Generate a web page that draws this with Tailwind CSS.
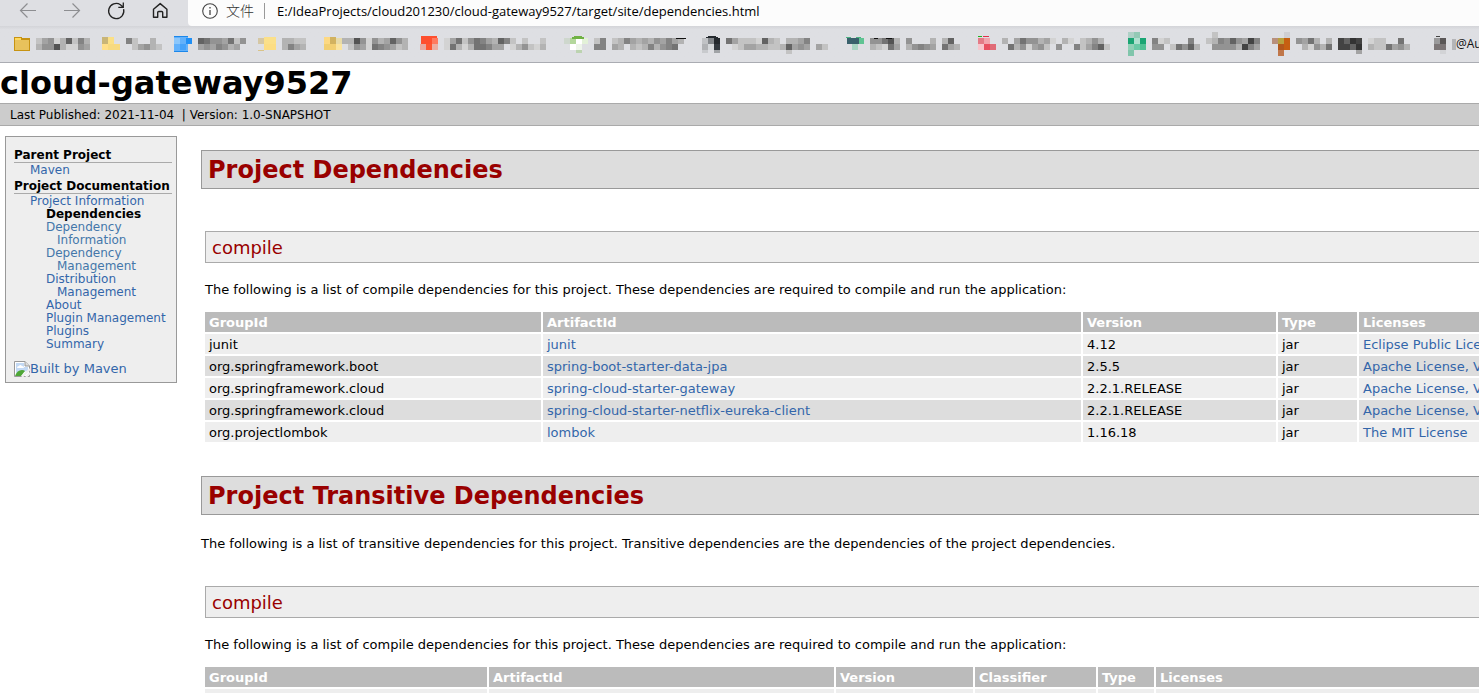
<!DOCTYPE html>
<html lang="en">
<head>
  <meta charset="utf-8"/>
  <meta name="viewport" content="width=device-width, initial-scale=1"/>
  <title>cloud-gateway9527 - Project Dependencies</title>
  <script src="https://cdn.jsdelivr.net/npm/@tailwindcss/browser@4"></script>
</head>
<body class="bg-white text-black font-['Verdana','DejaVu_Sans',sans-serif] text-[13px] leading-4 overflow-hidden">
  <!-- Browser toolbar -->
  <header class="bg-[#dedfe3] border-b border-[#aaacb2] font-['Open_Sans','Noto_Sans_CJK_SC',sans-serif]">
    <div class="flex h-[26px]">
      <nav class="flex items-start w-[188px] shrink-0 pl-[19px] gap-6 text-[#222]">
        <button aria-label="Back" class="w-5 h-[22px] text-[#8d8e91]">
          <svg width="20" height="22" viewBox="0 0 20 22" fill="none" stroke="currentColor" stroke-width="1.2"><path d="M17 10.5H1.5M8.500 3.500L1.500 10.500L8.500 17.500"/></svg>
        </button>
        <button aria-label="Forward" class="w-5 h-[22px] text-[#8d8e91]">
          <svg width="20" height="22" viewBox="0 0 20 22" fill="none" stroke="currentColor" stroke-width="1.2"><path d="M1 10.500H16.500M9.500 3.500L16.500 10.500L9.500 17.500"/></svg>
        </button>
        <button aria-label="Refresh" class="w-5 h-[22px]">
          <svg width="20" height="22" viewBox="0 0 20 22" fill="none" stroke="currentColor" stroke-width="1.3"><path d="M16.600 9.200A7.600 7.600 0 1 1 13.400 4.700L16 7M16.300 2.500V7.300H11.300"/></svg>
        </button>
        <button aria-label="Home" class="w-5 h-[22px]">
          <svg width="20" height="22" viewBox="0 0 20 22" fill="none" stroke="currentColor" stroke-width="1.4" stroke-linejoin="round"><path d="M2.500 9.300L9.200 3.600L15.900 9.300V17.300H11.700V12.500Q11.700 11.500 10.700 11.500H7.700Q6.700 11.500 6.700 12.500V17.300H2.500Z"/></svg>
        </button>
      </nav>
      <div class="flex grow items-center bg-[#fcfcfc] rounded-bl-[4px] pl-3.5 pb-1 text-[13px] whitespace-nowrap">
        <svg width="16" height="16" viewBox="0 0 16 16" fill="none" stroke="#444" stroke-width="1.1"><circle cx="8" cy="8" r="7.300"/><path d="M8 7V12M8 4V5.500" stroke-width="1.300"/></svg>
        <span class="ml-2 text-[14px] font-light text-[#333]">文件</span>
        <span class="w-px h-4 bg-[#999] ml-2.5 mr-3"></span>
        <input aria-label="Address" class="grow bg-transparent outline-none h-5" value="E:/IdeaProjects/cloud201230/cloud-gateway9527/target/site/dependencies.html"/>
      </div>
    </div>
    <div class="flex h-9 pl-3 pt-1.5 items-start overflow-hidden bg-linear-to-b from-[#d3d4d8] to-[#dedfe3] to-10%">
      <div id="bookmarks" class="flex shrink-0"></div>
      <a href="#" class="text-xs leading-6 text-[#111]">@Au</a>
    </div>
  </header>

  <!-- Banner -->
  <h1 class="text-[32px] leading-10 h-10 font-bold">cloud-gateway9527</h1>
  <div class="h-[23px] bg-[#ccc] border-y border-[#aaa] px-2.5 text-xs leading-[23px] whitespace-pre">Last Published: 2021-11-04  | Version: 1.0-SNAPSHOT</div>

  <div class="flex items-start">
    <!-- Left column -->
    <aside class="w-[172px] shrink-0 ml-[5px] mt-2.5 border border-[#999] bg-[#eee] pl-2 pr-1 pt-2.5 pb-1 text-xs leading-[13px] text-[#36a]">
      <h5 class="h-4 font-bold text-black border-b border-[#aaa] leading-[17px]">Parent Project</h5>
      <ul class="pl-4 pt-px mb-px">
        <li><a href="#">Maven</a></li>
      </ul>
      <h5 class="h-4 font-bold text-black border-b border-[#aaa] leading-[17px] whitespace-nowrap">Project Documentation</h5>
      <ul class="pl-4 pt-px whitespace-nowrap">
        <li><a href="#">Project Information</a>
          <ul class="pl-4">
            <li class="font-bold text-black">Dependencies</li>
            <li class="text-[#47a]"><a href="#">Dependency<br><span class="pl-[11px]">Information</span></a></li>
            <li class="text-[#47a]"><a href="#">Dependency<br><span class="pl-[11px]">Management</span></a></li>
            <li><a href="#">Distribution<br><span class="pl-[11px]">Management</span></a></li>
            <li><a href="#">About</a></li>
            <li><a href="#">Plugin Management</a></li>
            <li><a href="#">Plugins</a></li>
            <li><a href="#">Summary</a></li>
          </ul>
        </li>
      </ul>
      <a href="#" class="flex items-center mt-[9px] text-[13px] leading-[18px] whitespace-nowrap">
        <svg width="16" height="16" viewBox="0 0 16 16"><path d="M.5.500H11L15.500 5V15.500H.500Z" fill="#fff" stroke="#999"/><path d="M2 2H10V6H14V10L2 12Z" fill="#c3d9f4"/><path d="M3 7Q3 5 5 5Q6 3 8 5Q10 5 10 7Z" fill="#fff"/><path d="M1 15Q3 9 8 9Q10 9 11 10L7 15Z" fill="#4ea636"/><path d="M16 8L8 16M16 12L12 16" stroke="#eee" stroke-width="2"/><path d="M11 .500V5H15.500" fill="#ddd" stroke="#999"/></svg>Built by Maven
      </a>
    </aside>

    <!-- Body column -->
    <main class="grow min-w-0 ml-6 mt-6">
      <section>
        <h2 class="h-[39px] border border-r-0 border-[#999] bg-[#ddd] text-[#900] px-1.5 text-2xl leading-[38px] font-bold">Project Dependencies</h2>
        <div class="pl-1 pt-[42px]">
          <h3 class="h-8 border border-r-0 border-[#aaa] bg-[#eee] text-[#900] px-1.5 text-lg leading-8">compile</h3>
          <p class="mt-[19px] mb-3.5">The following is a list of compile dependencies for this project. These dependencies are required to compile and run the application:</p>
          <table class="w-full table-fixed border-separate border-spacing-0 whitespace-nowrap text-left [&_th]:h-[22px] [&_td]:h-[22px] [&_th]:px-1 [&_td]:px-1 [&_th]:pt-0.5 [&_td]:pt-0.5 [&_th]:border-b-2 [&_td]:border-b-2 [&_th:not(:last-child)]:border-r-2 [&_td:not(:last-child)]:border-r-2 [&_th]:border-white [&_td]:border-white [&_a]:text-[#36a]">
            <thead>
              <tr class="bg-[#bbb] text-white"><th class="w-[338px]">GroupId</th><th class="w-[540px]">ArtifactId</th><th class="w-[195px]">Version</th><th class="w-[81px]">Type</th><th>Licenses</th></tr>
            </thead>
            <tbody>
              <tr class="bg-[#eee]"><td>junit</td><td><a href="#">junit</a></td><td>4.12</td><td>jar</td><td><a href="#">Eclipse Public License 1.0</a></td></tr>
              <tr class="bg-[#ddd]"><td>org.springframework.boot</td><td><a href="#">spring-boot-starter-data-jpa</a></td><td>2.5.5</td><td>jar</td><td><a href="#">Apache License, Version 2.0</a></td></tr>
              <tr class="bg-[#eee]"><td>org.springframework.cloud</td><td><a href="#">spring-cloud-starter-gateway</a></td><td>2.2.1.RELEASE</td><td>jar</td><td><a href="#">Apache License, Version 2.0</a></td></tr>
              <tr class="bg-[#ddd]"><td>org.springframework.cloud</td><td><a href="#">spring-cloud-starter-netflix-eureka-client</a></td><td>2.2.1.RELEASE</td><td>jar</td><td><a href="#">Apache License, Version 2.0</a></td></tr>
              <tr class="bg-[#eee]"><td>org.projectlombok</td><td><a href="#">lombok</a></td><td>1.16.18</td><td>jar</td><td><a href="#">The MIT License</a></td></tr>
            </tbody>
          </table>
        </div>
      </section>

      <section class="mt-8">
        <h2 class="h-[39px] border border-r-0 border-[#999] bg-[#ddd] text-[#900] px-1.5 text-2xl leading-[38px] font-bold">Project Transitive Dependencies</h2>
        <p class="mt-[21px]">The following is a list of transitive dependencies for this project. Transitive dependencies are the dependencies of the project dependencies.</p>
        <div class="pl-1 pt-[34px]">
          <h3 class="h-8 border border-r-0 border-[#aaa] bg-[#eee] text-[#900] px-1.5 text-lg leading-8">compile</h3>
          <p class="mt-[19px] mb-3.5">The following is a list of compile dependencies for this project. These dependencies are required to compile and run the application:</p>
          <table class="w-full table-fixed border-separate border-spacing-0 whitespace-nowrap text-left [&_th]:h-[22px] [&_td]:h-[22px] [&_th]:px-1 [&_td]:px-1 [&_th]:pt-0.5 [&_td]:pt-0.5 [&_th]:border-b-2 [&_td]:border-b-2 [&_th:not(:last-child)]:border-r-2 [&_td:not(:last-child)]:border-r-2 [&_th]:border-white [&_td]:border-white">
            <thead>
              <tr class="bg-[#bbb] text-white"><th class="w-[284px]">GroupId</th><th class="w-[347px]">ArtifactId</th><th class="w-[139px]">Version</th><th class="w-[123px]">Classifier</th><th class="w-[58px]">Type</th><th>Licenses</th></tr>
            </thead>
            <tbody>
              <tr class="bg-[#eee]"><td></td><td></td><td></td><td></td><td></td><td></td></tr>
            </tbody>
          </table>
        </div>
      </section>
    </main>
  </div>

  <script>
    // Each bookmark: item width, icon shapes [x, y, w, h, fill], label offset
    // and four rows of 6px blocks (hex digit = grey level, dot = empty)
    const bookmarks = [
      { w: 84, icon: [[2, 5, 16, 14, '#c79312'], [3, 8, 14, 10, '#e8c25c'], [3, 6, 6, 2, '#ffd95c'], [10, 5, 8, 1, '#dedfe3']], at: 24, rows: ['', 'ca9db6c8b', 'b995bdd9a', ''] },
      { w: 72, icon: [[6, 5, 6, 7, '#c9b577'], [12, 5, 6, 7, '#fbe086'], [6, 12, 6, 6, '#ffdf8a'], [12, 12, 12, 6, '#f7da80']], at: 30, rows: ['', '8c..b.', '.ca9bc', ''] },
      { w: 90, icon: [[6, 4, 14, 16, '#62b1fb'], [6, 4, 14, 1, '#1b87ea'], [6, 19, 14, 1, '#1b87ea'], [6, 6, 6, 6, '#8cc7fb'], [18, 6, 6, 6, '#1f8ff5'], [12, 12, 6, 6, '#44a2fa']], at: 30, rows: ['', '6799a7c9', 'a9a89ba.', ''] },
      { w: 66, icon: [[0, 6, 6, 6, '#d5c7a4'], [6, 5, 12, 7, '#fbe08a'], [6, 12, 12, 6, '#fcdd83'], [0, 18, 6, 1, '#d9c389']], at: 24, rows: ['', 'bbcc', 'b8ab', ''] },
      { w: 96, icon: [[0, 5, 6, 7, '#fdd983'], [6, 5, 6, 7, '#d2b25f'], [12, 6, 6, 6, '#e8dba9'], [0, 12, 12, 6, '#f2cf72'], [12, 12, 6, 6, '#fbe49e']], at: 18, rows: ['', 'bb59d9ba69b', '.c9ad789acb', ''] },
      { w: 144, icon: [[1, 4, 16, 8, '#fe4f2e'], [12, 6, 6, 6, '#ff7a5f'], [0, 12, 6, 6, '#e7a9a0'], [6, 12, 6, 6, '#fe5530'], [12, 12, 6, 6, '#edaea2']], at: 24, rows: ['', 'da7c978ab68c.c..c', 'd7bdb778aa.db9cdb', ''] },
      { w: 138, icon: [[0, 6, 6, 6, '#ced7cd'], [6, 6, 6, 6, '#b3d79b'], [12, 6, 6, 6, '#fff'], [18, 6, 6, 6, '#e3f1d8'], [6, 12, 6, 6, '#fff'], [12, 12, 6, 6, '#eef5ea'], [12, 18, 6, 3, '#bcd3b0'], [10, 4, 8, 1, '#70b244'], [8, 5, 12, 2, '#70b244'], [112, 6, 10, 1, '#111']], at: 30, rows: ['', 'c8.cb8abab9a8ab', '88.ab.bcb8b987.', ''] },
      { w: 144, icon: [[6, 4, 8, 1, '#24292e'], [4, 5, 12, 1, '#24292e'], [0, 6, 6, 6, '#c0c2c5'], [6, 6, 6, 6, '#83878b'], [12, 6, 6, 6, '#24292e'], [0, 12, 6, 6, '#b0b2b5'], [6, 12, 6, 6, '#d5d8db'], [12, 12, 6, 6, '#343a40'], [0, 18, 6, 3, '#c8cacd'], [12, 18, 6, 3, '#a0a3a6']], at: 24, rows: ['', '7acccd6bc.bba8...', '.dcaabbccb6a9a.ac', '..........c......'] },
      { w: 132, icon: [[0, 5, 5, 1, '#4db182'], [10, 5, 5, 1, '#4db182'], [1, 6, 12, 6, '#39616c'], [13, 6, 5, 6, '#60c493'], [6, 12, 6, 6, '#a8d5c3'], [28, 6, 4, 1, '#111'], [40, 6, 6, 1, '#111']], at: 24, rows: ['', '9975b.9...b.b6.', 'bcd7a.b989a.7ab', ''] },
      { w: 150, icon: [[0, 4, 4, 1, '#20b020'], [5, 4, 6, 1, '#e0304a'], [0, 6, 6, 6, '#e47a86'], [6, 6, 6, 6, '#f2a4ad'], [0, 12, 6, 6, '#f8c5cc'], [6, 12, 6, 6, '#e84f60'], [12, 12, 6, 6, '#e06b77']], at: 24, rows: ['', 'b.a799bad.bd.cb9b.', '.7b9da9c.9..8ca86c', ''] },
      { w: 144, icon: [[0, 0, 6, 6, '#aed0c6'], [6, 0, 6, 6, '#93c9b5'], [0, 6, 6, 6, '#1aa573'], [6, 6, 6, 6, '#b0e0cf'], [12, 6, 6, 6, '#1aa573'], [0, 12, 6, 6, '#8fd0b5'], [6, 12, 6, 6, '#6cc9a6'], [12, 12, 6, 6, '#50c094'], [0, 18, 6, 6, '#80c5ab']], at: 24, rows: ['..........c.......', '8dc...8..cb8969a48', '99.c796b..9999b48a', ''] },
      { w: 162, icon: [[12, 0, 6, 6, '#cfcfd3'], [0, 6, 6, 6, '#b8907c'], [6, 6, 6, 6, '#b9a140'], [12, 6, 6, 12, '#c65f12'], [6, 12, 6, 6, '#b3581c'], [6, 18, 6, 6, '#c0774a']], at: 24, rows: ['', '9a7b.b.4634.dcc..7.', '.bd9b7.4463.bcc7a9b', '..........a........'] },
      { w: 22, icon: [[2, 4, 4, 1, '#444'], [0, 6, 6, 6, '#9a9a9b'], [6, 6, 6, 6, '#5a5757'], [0, 12, 12, 6, '#7c7677'], [6, 18, 6, 4, '#d2d3d6'], [18, 7, 6, 11, '#b4b5b8']], at: 0, rows: [] }
    ];

    const rect = (x, y, w, h, fill) => `<rect x="${x}" y="${y}" width="${w}" height="${h}" fill="${fill}"/>`;

    document.getElementById('bookmarks').innerHTML = bookmarks.map((b, i) => {
      const icon = b.icon.map(r => rect(...r)).join('');
      const label = b.rows.map((row, y) => [...row].map((c, x) =>
        c === '.' ? '' : rect(b.at + x * 6, y * 6, 6, y === 3 ? 4 : 6, '#' + c + '3' + c + '3' + c + '3')
      ).join('')).join('');
      return `<a href="#" aria-label="Bookmark ${i + 1}"><svg width="${b.w}" height="24" shape-rendering="crispEdges">${label}${icon}</svg></a>`;
    }).join('');
  </script>
</body>
</html>
